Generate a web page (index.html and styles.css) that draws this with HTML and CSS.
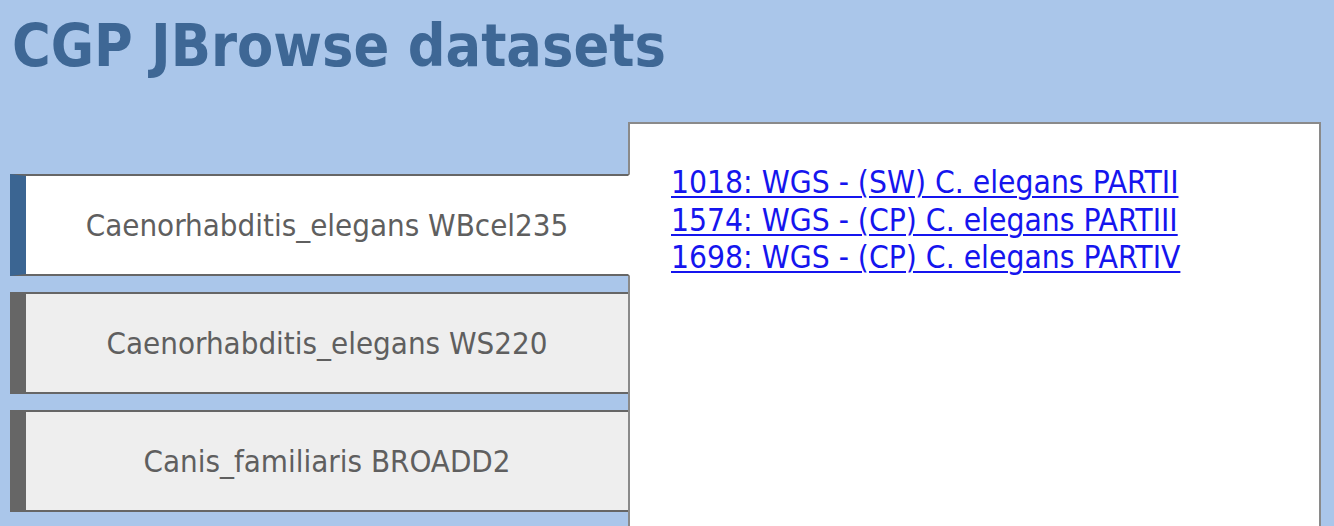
FILE: index.html
```html
<!DOCTYPE html>
<html>
<head>
<meta charset="utf-8">
<title>CGP JBrowse datasets</title>
<link rel="stylesheet" href="styles.css">
</head>
<body>
<h1 class="title">CGP JBrowse datasets</h1>
<div class="container">
  <div class="tablist">
    <div class="tab active"><span>Caenorhabditis_elegans WBcel235</span></div>
    <div class="tab"><span>Caenorhabditis_elegans WS220</span></div>
    <div class="tab"><span>Canis_familiaris BROADD2</span></div>
  </div>
  <div class="panel">
    <div class="links">
      <a href="#">1018: WGS - (SW) C. elegans PARTII</a>
      <a href="#">1574: WGS - (CP) C. elegans PARTIII</a>
      <a href="#">1698: WGS - (CP) C. elegans PARTIV</a>
    </div>
  </div>
</div>
</body>
</html>
```

FILE: styles.css
```css
html, body {
  margin: 0;
  padding: 0;
  background: #aac6ea;
  font-family: "DejaVu Sans Condensed", "DejaVu Sans", sans-serif;
  overflow: hidden;
}

.title {
  margin: 0;
  padding: 0 0 0 12px;
  height: 122px;
  box-sizing: border-box;
  padding-top: 11px;
  font-size: 58.7px;
  line-height: 70px;
  font-weight: bold;
  color: #3e6795;
}

.container {
  display: flex;
  align-items: flex-start;
  padding-left: 10px;
}

.tablist {
  display: flex;
  flex-direction: column;
  gap: 16px;
  margin-top: 52px;
  margin-right: -2px;
  width: 620px;
  flex: none;
}

.tab {
  height: 98px;
  display: flex;
  align-items: center;
  justify-content: center;
  background: #eeeeee;
  border-top: 2px solid #666666;
  border-bottom: 2px solid #666666;
  border-right: 2px solid #666666;
  border-left: 16px solid #666666;
  color: #5f5f5f;
  font-size: 31px;
}

.tab.active {
  background: #ffffff;
  border-left-color: #3b6592;
  border-right-color: #ffffff;
  position: relative;
  z-index: 1;
}

.panel {
  width: 689px;
  min-height: 402px;
  background: #ffffff;
  border: 2px solid #8a8a8a;
  flex: none;
}

.links {
  display: flex;
  flex-direction: column;
  align-items: flex-start;
  padding: 40px 0 0 41px;
}

.links a {
  color: #1515ee;
  font-size: 31.5px;
  line-height: 37.5px;
  text-decoration: underline;
  text-decoration-thickness: 2px;
  text-underline-offset: 3px;
}
```
